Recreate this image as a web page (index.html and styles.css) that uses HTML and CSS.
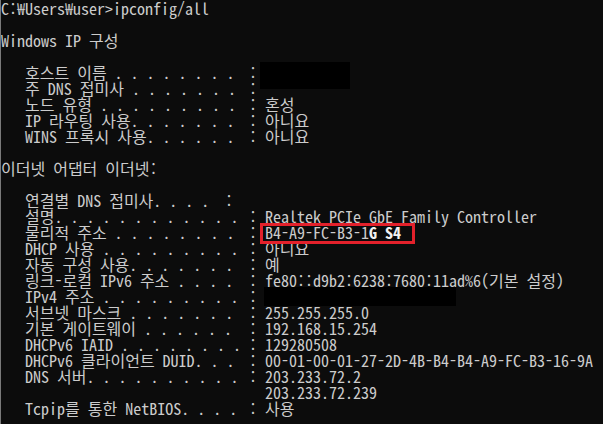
FILE: index.html
```html
<!DOCTYPE html>
<html lang="ko">
  <head>
    <meta charset="UTF-8" />
    <meta name="viewport" content="width=device-width, initial-scale=1.0" />
    <title>명령 프롬프트</title>
    <link rel="stylesheet" href="styles.css">
  </head>
  <body>
    <div class="console">
      <div class="row">C:₩Users₩user&gt;ipconfig/all</div>
      <div class="row"></div>
      <div class="row">Windows IP 구성</div>
      <div class="row"></div>
      <div class="row field"><span>   호스트 이름 . . . . . . . . </span><span>:</span><span></span></div>
      <div class="row field"><span>   주 DNS 접미사 . . . . . . . </span><span>:</span><span></span></div>
      <div class="row field"><span>   노드 유형 . . . . . . . . . </span><span>:</span><span>혼성</span></div>
      <div class="row field"><span>   IP 라우팅 사용. . . . . . . </span><span>:</span><span>아니요</span></div>
      <div class="row field"><span>   WINS 프록시 사용. . . . . . </span><span>:</span><span>아니요</span></div>
      <div class="row"></div>
      <div class="row">이더넷 어댑터 이더넷:</div>
      <div class="row"></div>
      <div class="row short"><span>   연결별 DNS 접미사. . . . </span><span>:</span></div>
      <div class="row field"><span>   설명. . . . . . . . . . . . </span><span>:</span><span>Realtek PCIe GbE Family Controller</span></div>
      <div class="row field"><span>   물리적 주소 . . . . . . . . </span><span>:</span><span>B4-A9-FC-B3-1<b class="edited">G S4</b></span></div>
      <div class="row field"><span>   DHCP 사용 . . . . . . . . . </span><span>:</span><span>아니요</span></div>
      <div class="row field"><span>   자동 구성 사용. . . . . . . </span><span>:</span><span>예</span></div>
      <div class="row field"><span>   링크-로컬 IPv6 주소 . . . . </span><span>:</span><span>fe80::d9b2:6238:7680:11ad%6(기본 설정)</span></div>
      <div class="row field"><span>   IPv4 주소 . . . . . . . . . </span><span>:</span><span></span></div>
      <div class="row field"><span>   서브넷 마스크 . . . . . . . </span><span>:</span><span>255.255.255.0</span></div>
      <div class="row field"><span>   기본 게이트웨이 . . . . . . </span><span>:</span><span>192.168.15.254</span></div>
      <div class="row field"><span>   DHCPv6 IAID . . . . . . . . </span><span>:</span><span>129280508</span></div>
      <div class="row field"><span>   DHCPv6 클라이언트 DUID. . . </span><span>:</span><span>00-01-00-01-27-2D-4B-B4-B4-A9-FC-B3-16-9A</span></div>
      <div class="row field"><span>   DNS 서버. . . . . . . . . . </span><span>:</span><span>203.233.72.2</span></div>
      <div class="row field"><span></span><span></span><span>203.233.72.239</span></div>
      <div class="row field"><span>   Tcpip를 통한 NetBIOS. . . . </span><span>:</span><span>사용</span></div>

      <div class="redact redact-host"></div>
      <div class="redact redact-ipv4"></div>
      <div class="highlight"></div>
    </div>
  </body>
</html>
```

FILE: styles.css
```css
* {
    box-sizing: border-box;
}

body {
    margin: 0;
    background: #0c0c0c;
}

.console {
    position: relative;
    width: 603px;
    height: 424px;
    overflow: hidden;
    border-left: 1px solid #7a7a7a;
    background: #0c0c0c;
    color: #cccccc;
    font-family: "Noto Sans Mono CJK KR", monospace;
    font-size: 16px;
}

.row {
    height: 16px;
    line-height: 16px;
    white-space: pre;
}

/* 라벨 . . . : 값  (콜론은 31칸, 값은 33칸) */
.field {
    display: grid;
    grid-template-columns: 248px 16px auto;
}

.short {
    display: grid;
    grid-template-columns: 224px 8px;
}

.field span,
.short span {
    overflow: visible;
}

.edited {
    color: #f2f2f2;
    font-weight: bold;
}

/* 가림 처리 */
.redact {
    position: absolute;
    background: #000;
}

.redact-host {
    left: 259px;
    top: 62px;
    width: 90px;
    height: 27px;
}

.redact-ipv4 {
    left: 263px;
    top: 287px;
    width: 192px;
    height: 19px;
}

.highlight {
    position: absolute;
    left: 259px;
    top: 223px;
    width: 155px;
    height: 21px;
    border: 3px solid #e3212b;
}
```
